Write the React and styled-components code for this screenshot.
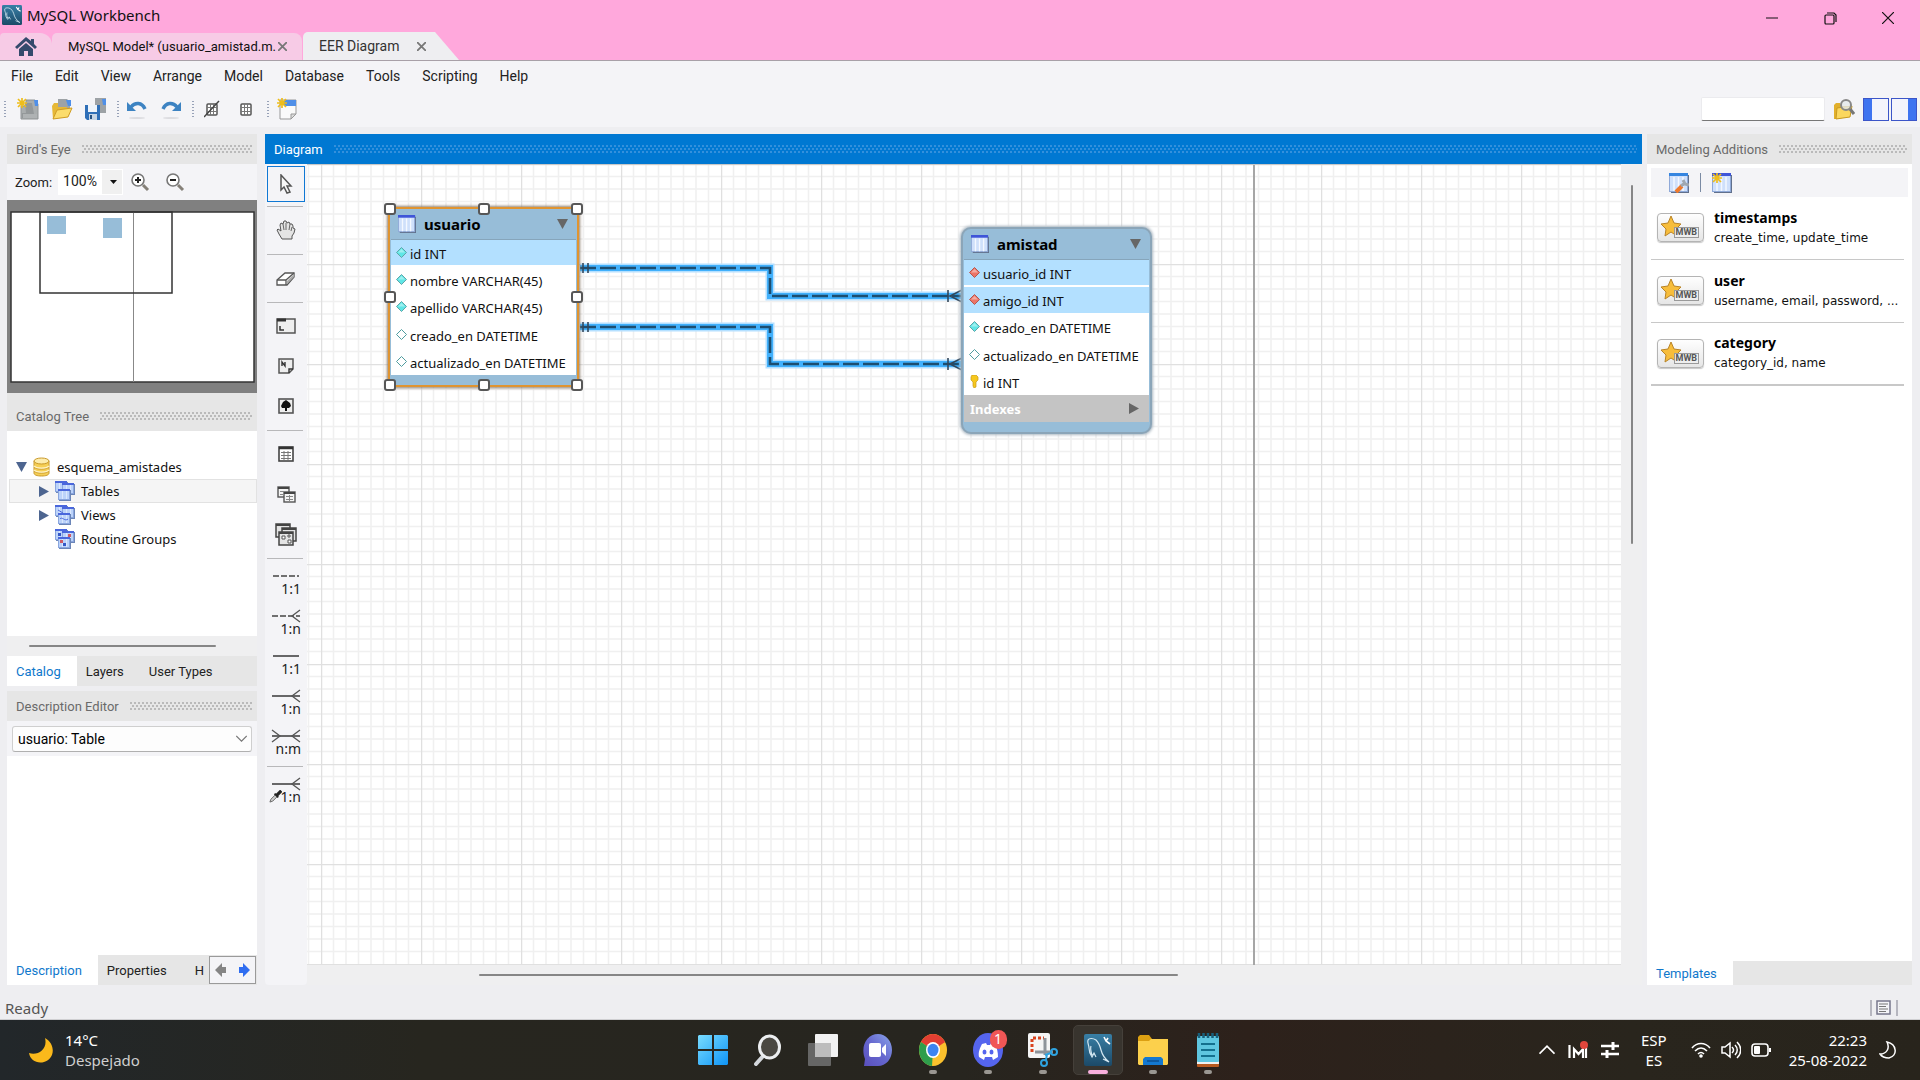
import React from "react";
import styled, { createGlobalStyle, css } from "styled-components";

const ui = '"Roboto", "Liberation Sans", sans-serif';
const system = '"Noto Sans", "Open Sans", sans-serif';
const wide = '"DejaVu Sans", sans-serif';

const Global = createGlobalStyle`
  *, *::before, *::after { box-sizing: border-box; }
  body { margin: 0; background: #eeeef1; font-family: ${ui}; font-size: 14px; color: #222; }
  button, input, select { font: inherit; color: inherit; }
  button { border: 0; padding: 0; background: none; }
  svg { display: block; flex: none; }
  ul { list-style: none; margin: 0; padding: 0; }
`;

/* ---------- window frame ---------- */

const Window = styled.div`
  display: flex;
  flex-direction: column;
  height: 100vh;
  overflow: hidden;
`;

const TitleArea = styled.header`
  background: #ffa8dc;
  height: 61px;
  flex: none;
  display: flex;
  flex-direction: column;
  justify-content: space-between;
  border-bottom: 1px solid #a8a0a8;
`;

const TitleRow = styled.div`
  display: flex;
  justify-content: space-between;
  height: 32px;
`;

const AppTitle = styled.h1`
  margin: 0;
  padding-left: 2px;
  display: flex;
  align-items: center;
  gap: 5px;
  height: 30px;
  font: 400 15px/20px ${system};
  color: #111;
`;

const WindowButtons = styled.div`
  display: flex;
  padding-right: 3px;
`;

const WindowButton = styled.button`
  width: 58px;
  height: 36px;
  display: grid;
  place-items: center;
`;

const FileTabs = styled.nav`
  display: flex;
  align-items: flex-end;
  height: 28px;
`;

const HomeTab = styled.button`
  width: 52px;
  height: 27px;
  display: grid;
  place-items: center;
  background: #f7cbe6;
  border-radius: 4px 12px 0 0;
`;

const FileTab = styled.div`
  display: flex;
  align-items: center;
  justify-content: space-between;
  height: ${(p) => (p.$active ? 28 : 27)}px;
  width: ${(p) => (p.$active ? 156 : 250)}px;
  padding: 0 ${(p) => (p.$active ? 32 : 14)}px 0 16px;
  background: ${(p) => (p.$active ? "#eeeef1" : "#f7cbe6")};
  color: ${(p) => (p.$active ? "#333" : "#111")};
  font-size: ${(p) => (p.$active ? 14 : 13)}px;
  border-radius: 5px ${(p) => (p.$active ? 0 : 8)}px 0 0;
  margin-right: 1px;
  white-space: nowrap;
  ${(p) => p.$active && css`clip-path: polygon(0 0, 132px 0, 100% 100%, 0 100%);`}
`;

const TabClose = styled.button`
  display: grid;
  place-items: center;
  width: 12px;
  height: 12px;
`;

const MenuBar = styled.nav`
  display: flex;
  flex: none;
  gap: 22px;
  padding-left: 11px;
  height: 30px;
  background: #f4f4f7;
`;

const MenuItem = styled.button`
  color: #222;
`;

const Toolbar = styled.div`
  display: flex;
  flex: none;
  align-items: center;
  justify-content: space-between;
  height: 36px;
  padding: 0 3px 0 4px;
  background: #f4f4f7;
`;

const ToolGroup = styled.div`
  display: flex;
  align-items: center;
  gap: ${(p) => p.$gap || 0}px;
`;

const Grip = styled.span`
  width: 2px;
  height: 17px;
  margin: ${(p) => (p.$first ? "0 5px 0 0" : "0 1px 0 4px")};
  background: repeating-linear-gradient(#98a2b8 0 1px, transparent 1px 3px);
`;

const ToolButton = styled.button`
  width: 34px;
  height: 28px;
  display: grid;
  place-items: center;
`;

const SearchBox = styled.input`
  width: 124px;
  height: 24px;
  padding: 0 4px;
  background: #fff;
  border: 1px solid #ebebee;
  border-bottom: 1px solid #777;
  border-radius: 2px;
`;

const ToggleButton = styled.button`
  width: 26px;
  height: 23px;
  border: 1px solid #3c55c8;
  background: ${(p) =>
    p.$side === "left"
      ? "linear-gradient(90deg, #3f74f0 8px, #f4f4fb 8px)"
      : "linear-gradient(270deg, #3f74f0 8px, #f4f4fb 8px)"};
`;

/* ---------- panels ---------- */

const Workspace = styled.main`
  display: flex;
  flex: 1;
  min-height: 0;
  padding: 7px 8px 0 7px;
`;

const Side = styled.aside`
  display: flex;
  flex-direction: column;
  flex: none;
  width: ${(p) => p.$w}px;
`;

const Header = styled.div`
  display: flex;
  align-items: center;
  flex: none;
  gap: 11px;
  height: ${(p) => (p.$tall ? 38 : 30)}px;
  padding: ${(p) => (p.$tall ? 8 : 0)}px 5px 0 9px;
  background: ${(p) => (p.$active ? "#0078d2" : "#e6e6e6")};
  color: ${(p) => (p.$active ? "#fff" : "#6a6a6a")};
  font-size: 13px;
  white-space: nowrap;
`;

const Dots = styled.span`
  flex: 1;
  height: 8px;
  --dot: ${(p) => (p.$active ? "#3490dc" : "#bababa")};
  background:
    radial-gradient(circle at 1px 1px, var(--dot) 1px, transparent 1px) 0 0 / 4px 6px,
    radial-gradient(circle at 3px 4px, var(--dot) 1px, transparent 1px) 0 0 / 4px 6px;
`;

const ZoomRow = styled.div`
  display: flex;
  align-items: center;
  flex: none;
  height: 36px;
  padding-left: 8px;
  background: #f4f4f7;
`;

const ZoomLabel = styled.label`
  font-size: 13px;
`;

const SelectWrap = styled.div`
  position: relative;
  display: flex;
  flex: ${(p) => (p.$grow ? 1 : "none")};
  svg {
    position: absolute;
    right: ${(p) => (p.$grow ? 5 : 6)}px;
    top: ${(p) => (p.$grow ? 9 : 11)}px;
    pointer-events: none;
  }
`;

const ZoomSelect = styled.select`
  appearance: none;
  width: 65px;
  height: 26px;
  margin-left: 6px;
  padding: 0 0 2px 4px;
  border: 1px solid #fff;
  border-radius: 0;
  background: linear-gradient(270deg, #f0f0f0 20px, #fff 20px);
`;

const ObjectSelect = styled.select`
  appearance: none;
  width: 100%;
  height: 26px;
  padding: 0 5px;
  border: 1px solid #cfcfcf;
  border-bottom-color: #b0b0b0;
  border-radius: 3px;
  background: #fdfdfd;
  color: #000;
`;

const ZoomButton = styled.button`
  width: 35px;
  height: 28px;
  display: grid;
  place-items: center;
`;

const BirdView = styled.div`
  flex: none;
  height: 193px;
  background: #808080;
`;

const Tree = styled.div`
  flex: none;
  height: 205px;
  padding: 24px 0 0 2px;
  background: #fff;
  font-family: ${system};
  font-size: 13px;
  color: #111;
`;

const TreeRow = styled.div`
  display: flex;
  align-items: center;
  gap: 6px;
  height: 24px;
  padding-left: ${(p) => (p.$depth ? 29 : 6)}px;
  border: 1px solid ${(p) => (p.$hover ? "#e2e2e2" : "transparent")};
  background: ${(p) => (p.$hover ? "#f5f5f5" : "transparent")};
`;

const TreeLabel = styled.span`
  padding-left: ${(p) => (p.$depth ? 0 : 1)}px;
`;

const HScroll = styled.div`
  flex: none;
  height: ${(p) => p.$h}px;
  padding: 9px ${(p) => p.$right} 0 ${(p) => p.$left};
  background: #efeff0;
`;

const Thumb = styled.div`
  height: ${(p) => (p.$vertical ? "359px" : "2px")};
  width: ${(p) => (p.$vertical ? "2px" : "100%")};
  background: #868686;
  border-radius: 1px;
`;

const Tabs = styled.div`
  display: flex;
  flex: none;
  height: ${(p) => p.$h || 30}px;
  background: #e6e6e6;
  font-size: 13px;
  overflow: hidden;
`;

const Tab = styled.button`
  flex: none;
  padding: 0 16px 0 9px;
  background: ${(p) => (p.$active ? "#fff" : "transparent")};
  color: ${(p) => (p.$active ? "#0f78cc" : "#222")};
`;

const CutTab = styled(Tab)`
  flex: 1;
  min-width: 0;
  padding: 0 0 0 12px;
  text-align: left;
`;

const TabArrows = styled.div`
  flex: none;
  display: flex;
  align-items: center;
  justify-content: space-around;
  width: 47px;
  height: 28px;
  margin: 1px 1px 0 0;
  background: #f4f4f7;
  border: 1px solid #9a9a9a;
`;

const ComboRow = styled.div`
  display: flex;
  flex: none;
  height: 35px;
  padding: 5px;
  background: #f4f4f7;
`;

const Blank = styled.div`
  flex: 1;
  background: #fff;
`;

const Gap = styled.div`
  height: 5px;
  flex: none;
`;

/* ---------- diagram ---------- */

const Center = styled.section`
  display: flex;
  flex-direction: column;
  flex: 1;
  min-width: 0;
  margin: 0 5px 0 8px;
`;

const CenterBody = styled.div`
  display: flex;
  flex: 1;
  min-height: 0;
`;

const Palette = styled.div`
  display: flex;
  flex-direction: column;
  flex: none;
  width: 42px;
  padding: 2px 2px 0 2px;
  background: #f4f4f7;
  border-radius: 0 0 4px 4px;
`;

const PaletteButton = styled.button`
  display: flex;
  flex-direction: column;
  align-items: ${(p) => (p.$relation ? "flex-end" : "center")};
  justify-content: center;
  flex: none;
  height: ${(p) => (p.$selected ? 36 : 40)}px;
  padding-right: ${(p) => (p.$relation ? 4 : 0)}px;
  border: ${(p) => (p.$selected ? "1px solid #0f78d4" : "0")};
  font: 400 14px/12px ${system};
  color: #222;
`;

const PaletteRule = styled.hr`
  flex: none;
  width: 36px;
  height: 1px;
  margin: 4px 0 3px;
  border: 0;
  background: #b8b8ba;
`;

const CanvasColumn = styled.div`
  display: flex;
  flex-direction: column;
  flex: 1;
  min-width: 0;
`;

const CanvasRow = styled.div`
  display: flex;
  flex: 1;
  min-height: 0;
`;

const Canvas = styled.div`
  position: relative;
  flex: 1;
  min-width: 0;
  overflow: hidden;
  background: #fff;
  border-top: 1px solid #c8c8c8;
`;

const CanvasLayer = styled.svg`
  position: absolute;
  inset: 0;
  width: 100%;
  height: 100%;
`;

const VScroll = styled.div`
  flex: none;
  width: 21px;
  padding: 21px 0 0 10px;
  background: #efeff0;
`;

const Entity = styled.article`
  position: absolute;
  left: ${(p) => p.$x}px;
  top: ${(p) => p.$y}px;
  width: 191px;
  padding: 0 1px 10px;
  background: #97bdd8;
  border: 2px solid ${(p) => (p.$selected ? "#df9431" : "#8ba5b8")};
  border-radius: ${(p) => (p.$selected ? 4 : 10)}px;
  box-shadow: 0 0 3px 1px ${(p) => (p.$selected ? "#8f7f70" : "#a9b6c0")};
  font-family: ${system};
  font-size: 13px;
  color: #111;
`;

const EntityHead = styled.div`
  display: flex;
  align-items: center;
  height: 31px;
  padding: 0 8px 0 7px;
  border-bottom: 1px solid #86a5bb;
`;

const EntityName = styled.h2`
  flex: 1;
  margin: 0;
  padding-left: 8px;
  font: 700 15px/20px ${system};
  color: #000;
`;

const Columns = styled.ul`
  display: grid;
  grid-auto-rows: 1fr;
  gap: 2px;
  height: 135px;
  background: #fff;
`;

const Column = styled.li`
  display: flex;
  align-items: center;
  gap: 3px;
  padding: 2px 0 0 5px;
  background: ${(p) => (p.$key ? "#b3e0ff" : "#fff")};
  white-space: nowrap;
  svg { margin-bottom: 3px; }
`;

const Indexes = styled.div`
  display: flex;
  align-items: center;
  justify-content: space-between;
  height: 27px;
  padding: 0 10px 0 6px;
  background: #c4c4c4;
  font-weight: 700;
  color: #fff;
`;

const Handle = styled.span`
  position: absolute;
  left: ${(p) => p.$x};
  top: ${(p) => p.$y};
  width: 12px;
  height: 12px;
  margin: -6px 0 0 -6px;
  background: #fff;
  border: 2px solid #575757;
  border-radius: 3px;
`;

/* ---------- templates ---------- */

const TemplateArea = styled.div`
  flex: 1;
  min-height: 0;
  padding: 4px 4px 0 4px;
  background: #fff;
`;

const TemplateTools = styled.div`
  display: flex;
  align-items: center;
  gap: 11px;
  height: 29px;
  padding-left: 18px;
  background: #f4f4f7;
`;

const ToolRule = styled.span`
  width: 1px;
  height: 19px;
  background: #7b8ba4;
`;

const Template = styled.li`
  display: flex;
  align-items: center;
  gap: 10px;
  height: 63px;
  margin-right: 4px;
  padding: 0 0 1px 6px;
  border-bottom: 1px solid #c8c8c8;
  &:last-child { border-bottom-width: 2px; }
`;

const TemplateText = styled.div`
  font: 400 12px/20px ${wide};
  color: #111;
  white-space: nowrap;
`;

const TemplateName = styled.div`
  font: 700 14px/20px ${system};
  color: #000;
`;

const Badge = styled.span`
  position: relative;
  display: block;
  width: 47px;
  height: 29px;
  border: 1px solid #b4b4b4;
  border-radius: 4px;
  background: linear-gradient(#fefefe, #e6e6e6);
  box-shadow: 0 1px 1px #c8c8c8;
`;

const BadgeText = styled.span`
  position: absolute;
  right: 4px;
  bottom: 3px;
  padding: 0 1px;
  border: 1px solid #9a9a9a;
  background: #eee;
  font: 700 9px/9px ${ui};
  color: #555;
`;

const StatusBar = styled.footer`
  display: flex;
  align-items: center;
  justify-content: space-between;
  flex: none;
  height: 35px;
  padding: 12px 22px 0 5px;
  border-bottom: 1px solid #cfcfd2;
  font: 400 15px/20px ${system};
  color: #555;
`;

/* ---------- taskbar ---------- */

const Taskbar = styled.footer`
  display: grid;
  grid-template-columns: 1fr auto 1fr;
  align-items: center;
  flex: none;
  height: 60px;
  background: linear-gradient(90deg, #22272a 0, #27261f 22%, #27251f 50%, #2d211b 65%, #29251d 85%, #28241c);
  color: #fff;
  font: 400 15px/20px ${system};
`;

const Weather = styled.div`
  display: flex;
  align-items: center;
  gap: 11px;
  padding-left: 28px;
`;

const Dim = styled.div`
  color: #cfcfcf;
`;

const Apps = styled.div`
  display: flex;
  gap: 5px;
`;

const AppButton = styled.button`
  position: relative;
  width: 50px;
  height: 50px;
  display: grid;
  place-items: center;
  border-radius: 5px;
  border: 1px solid ${(p) => (p.$active ? "#45403a" : "transparent")};
  background: ${(p) => (p.$active ? "#38342e" : "transparent")};
  &::after {
    content: "";
    position: absolute;
    bottom: 0;
    left: calc(50% - ${(p) => (p.$active ? 10 : 4)}px);
    width: ${(p) => (p.$active ? 20 : 8)}px;
    height: 4px;
    border-radius: 2px;
    background: ${(p) => (p.$active ? "#f9b0de" : p.$open ? "#9a9792" : "transparent")};
  }
`;

const Count = styled.span`
  position: absolute;
  right: 5px;
  top: 4px;
  width: 17px;
  height: 19px;
  border-radius: 9px;
  background: #f05656;
  color: #fff;
  font: 400 14px/18px ${system};
  text-align: center;
`;

const Tray = styled.div`
  display: flex;
  align-items: center;
  justify-content: flex-end;
  padding-right: 24px;
`;

const TrayIcons = styled.div`
  display: flex;
  align-items: center;
  gap: ${(p) => p.$gap}px;
`;

const Language = styled.div`
  text-align: center;
  margin: 0 24px 0 22px;
`;

const Clock = styled.div`
  text-align: right;
  margin: 0 12px 0 18px;
`;

/* ---------- icons ---------- */

const Dolphin = ({ size = 20, h = size }) => (
  <svg width={size} height={h} viewBox="0 0 28 32" preserveAspectRatio="none">
    <defs>
      <linearGradient id="dolphinBg" x1="0" y1="0" x2="0" y2="1">
        <stop offset="0" stopColor="#387fa6" />
        <stop offset="1" stopColor="#1c4a68" />
      </linearGradient>
    </defs>
    <rect width="28" height="32" rx="2" fill="url(#dolphinBg)" />
    <path d="M4 6c1-2 5-2 8 0 3 3 4 6 5 10 1 4 3 8 8 12l-6-3M4 6c-1 3 1 5 1 8 0 4 1 6 3 9l2-4 2 4M7 12c-1 3 0 6 1 9" fill="none" stroke="#d4e8f2" strokeWidth="1.200" />
    <path d="M20 3l2 4 4 3M24 4l-2 3" stroke="#fff" strokeWidth="1.600" fill="none" />
  </svg>
);

const House = () => (
  <svg width="22" height="19" viewBox="0 0 22 19">
    <path d="M11 0L0 10l2 2 9-8 9 8 2-2-3-3V2h-3v2z" fill="#354a6c" />
    <path d="M4 12l7-6 7 6v7h-5v-5H9v5H4z" fill="#354a6c" />
  </svg>
);

const Cross = ({ size = 9, color = "#777", w = 2 }) => (
  <svg width={size} height={size} viewBox="0 0 10 10">
    <path d="M0 0L10 10M10 0L0 10" stroke={color} strokeWidth={w} />
  </svg>
);

const Spark = () => (
  <path d="M5 0v10M0 5h10M1 1l8 8M9 1L1 9" stroke="#eebd1c" strokeWidth="1.700" />
);

const NewModel = () => (
  <svg width="22" height="22" viewBox="0 0 22 22">
    <path d="M9 2h9l3 4v15H4V8h5z" fill="#a9adae" stroke="#909496" />
    <path d="M17 2h4v6h-3z" fill="#4f8fe8" />
    <path d="M8 5h7l2 11h3v4H5v-5h4z" fill="#94989a" />
    <path d="M6 17h14M6 19h14" stroke="#c9cccd" />
    <Spark />
  </svg>
);

const OpenModel = () => (
  <svg width="22" height="22" viewBox="0 0 22 22">
    <path d="M7 1h9l3 3v8H7z" fill="#9da2a6" />
    <path d="M15 2h5v6h-3z" fill="#4f8fe8" />
    <path d="M1 8l2-3h4v4h9v3H6l-4 9z" fill="#e6b836" />
    <path d="M2 21l4-9 15-2-4 9z" fill="#fbdc6c" stroke="#cf9b20" />
  </svg>
);

const SaveModel = () => (
  <svg width="22" height="22" viewBox="0 0 22 22">
    <path d="M10 0h11v15H10z" fill="#9da2a6" />
    <path d="M17 1h4v6h-3z" fill="#4f8fe8" />
    <path d="M0 7h15v15H2l-2-2z" fill="#2f6fb7" />
    <rect x="3" y="7" width="9" height="7" fill="#eef4fb" />
    <rect x="4" y="16" width="8" height="6" fill="#c5d4e4" />
    <rect x="5" y="17" width="2" height="4" fill="#25507f" />
  </svg>
);

const Undo = ({ flip }) => (
  <svg width="20" height="22" viewBox="0 0 20 22">
    <g transform={flip ? "matrix(-1 0 0 1 20 0)" : undefined}>
      <path d="M4 9c4-5 11-5 14 2" fill="none" stroke="#3d83c2" strokeWidth="3.400" />
      <path d="M0 4v9h9z" fill="#3d83c2" />
    </g>
    <ellipse cx="10" cy="20" rx="8" ry="1" fill="#dcdce0" />
  </svg>
);

const GridIcon = ({ off }) => (
  <svg width="16" height="18" viewBox="0 0 16 18">
    <rect x="3" y="4" width="10" height="11" rx="1" fill="#fff" stroke="#555" strokeWidth="1.500" />
    <path d="M6.500 4v11M9.500 4v11M3 7.500h10M3 11.500h10" stroke="#777" />
    {off && <path d="M0 17L15 1" stroke="#444" strokeWidth="1.500" />}
  </svg>
);

const NewPage = () => (
  <svg width="20" height="22" viewBox="0 0 20 22">
    <path d="M3 2h16v14l-5 5H3z" fill="#fafafa" stroke="#999" />
    <rect x="7" y="2" width="12" height="6" fill="#4f8fe8" />
    <path d="M19 16h-5v5z" fill="#ddd" stroke="#999" />
    <Spark />
  </svg>
);

const SearchFolder = () => (
  <svg width="22" height="22" viewBox="0 0 22 22">
    <path d="M1 7l2-2h4l2 3h9v5l-2 6-13 2H1z" fill="#e2b02c" />
    <path d="M3 21l1-11 15-2-2 11z" fill="#fbd75e" stroke="#c99a1f" />
    <circle cx="13" cy="7" r="5" fill="#e4e8ea" fillOpacity=".8" stroke="#888" strokeWidth="2" />
    <path d="M17 11l4 5" stroke="#777" strokeWidth="3" />
  </svg>
);

const Lens = ({ plus }) => (
  <svg width="19" height="19" viewBox="0 0 19 19">
    <circle cx="7" cy="7" r="6" fill="#fff" stroke="#777" strokeWidth="1.600" />
    <path d={plus ? "M4 7h6M7 4v6" : "M4 7h6"} stroke="#222" strokeWidth="2" />
    <path d="M12 12l5 5" stroke="#858078" strokeWidth="3" />
  </svg>
);

const Triangle = ({ dir, color = "#4d6590", w = 11, h = 10 }) => (
  <svg width={w} height={h} viewBox="0 0 10 10" preserveAspectRatio="none">
    <path d={dir === "down" ? "M0 0h10L5 10z" : "M0 0v10l10-5z"} fill={color} />
  </svg>
);

const Chevron = ({ up, color = "#777", w = 11, h = 7 }) => (
  <svg width={w} height={h} viewBox="0 0 12 8">
    <path d={up ? "M0 7l6-6 6 6" : "M0 1l6 6 6-6"} fill="none" stroke={color} strokeWidth="1.400" />
  </svg>
);

const Database = () => (
  <svg width="17" height="20" viewBox="0 0 17 20">
    <path d="M1 4v12c0 2 3 3 7.500 3s7.500-1 7.500-3V4z" fill="#f6cf55" stroke="#c9992a" />
    <ellipse cx="8.500" cy="4" rx="7.500" ry="3" fill="#fdecac" stroke="#c9992a" />
    <path d="M1 9c2 3 13 3 15 0M1 13c2 3 13 3 15 0" fill="none" stroke="#fff3c4" strokeWidth="1.500" />
    <path d="M1 10c2 3 13 3 15 0M1 14c2 3 13 3 15 0" fill="none" stroke="#c9992a" strokeWidth=".8" />
  </svg>
);

const MiniTable = ({ x, y }) => (
  <g transform={`translate(${x} ${y})`}>
    <rect x="1" y="1" width="12" height="11" fill="#6c86b8" />
    <rect x=".5" y=".5" width="11" height="10" fill="#bcd3fa" stroke="#8aa6de" />
    <rect width="12" height="2" fill="#4a67dc" />
    <path d="M4.500 2v8M8.500 2v8" stroke="#dbe8fd" />
  </g>
);

const TreeIcon = ({ kind }) => (
  <svg width="20" height="20" viewBox="0 0 20 20">
    <MiniTable x={0} y={0} />
    <MiniTable x={7} y={2} />
    <MiniTable x={3} y={8} />
    {kind === "views" && <path d="M5 14c2-3 5 3 8 0M3 5l5 3" stroke="#4a67dc" fill="none" />}
    {kind === "routines" && (
      <g>
        <path d="M3 4h3v3H3zM8 14h3v3H8z" fill="#3458c8" />
        <path d="M13 5h3v3h-3zM5 11h3v3H5z" fill="#cf5a66" />
      </g>
    )}
  </svg>
);

const TableIcon = ({ spark, wrench, size = 18 }) => (
  <svg width={size} height={size} viewBox="0 0 20 20">
    <rect x="2" y="2" width="18" height="18" fill="#61708c" />
    <rect x=".5" y=".5" width="18" height="18" fill="#cfe0fb" stroke="#8fa9d8" />
    <rect width="19" height="3" fill={wrench ? "#3585e0" : "#3f55d8"} />
    <path d="M5 4v14M9.500 4v14M14 4v14" stroke="#f4f8ff" strokeWidth="1.500" />
    {spark && <Spark />}
    {wrench && (
      <g>
        <path d="M7 19l6-6" stroke="#ef7a2c" strokeWidth="4" />
        <path d="M12 13l4-3M14 7l2 4 4 1" stroke="#9fa7b0" strokeWidth="3" fill="none" />
      </g>
    )}
  </svg>
);

const Diamond = ({ kind }) => {
  if (kind === "key")
    return (
      <svg width="11" height="13" viewBox="0 0 11 13">
        <path d="M3 0h4l2 2v3L7 7v5L5 13 4 11V7L2 5V2z" fill="#f6c81e" stroke="#c79a18" strokeWidth=".7" />
      </svg>
    );
  const fill = { cyan: "#5fe6e6", red: "#ec7466", empty: "#fff" }[kind];
  const line = { cyan: "#5fa5a8", red: "#b4574f", empty: "#4f9c9f" }[kind];
  return (
    <svg width="11" height="11" viewBox="0 0 11 11">
      <path d="M5.500 .5L10.500 5.500 5.500 10.500 .5 5.500z" fill={fill} stroke={line} />
      {kind !== "empty" && <path d="M5.500 2L9 5.500H2z" fill="#fff" fillOpacity=".4" />}
    </svg>
  );
};

const Relation = ({ kind }) => (
  <svg width="30" height="14" viewBox="0 0 30 14">
    <path
      d={kind.one ? "M2 7h26" : "M1 7h28"}
      stroke="#444"
      strokeWidth="1.600"
      strokeDasharray={kind.dashed ? "6 2" : undefined}
    />
    {!kind.one && <path d="M29 1l-8 6 8 6" fill="none" stroke="#555" strokeWidth="1.300" />}
    {kind.both && <path d="M1 1l8 6-8 6" fill="none" stroke="#555" strokeWidth="1.300" />}
  </svg>
);

const Dropper = styled.svg`
  position: absolute;
  left: 0;
  bottom: 0;
`;

const RelationText = styled.span`
  position: relative;
  width: ${(p) => (p.$wide ? "32px" : "auto")};
  text-align: right;
`;

const Pal = ({ kind }) => {
  switch (kind) {
    case "cursor":
      return (
        <svg width="14" height="20" viewBox="0 0 14 20">
          <path d="M2 1v15l3-3 3 6 3-1-3-6h4z" fill="#f8f8f8" stroke="#555" strokeWidth="1.500" />
        </svg>
      );
    case "hand":
      return (
        <svg width="20" height="20" viewBox="0 0 20 20">
          <path d="M6 19l-3-5-2-4 1-1 3 2-1-6 1-2 2 1 1-3h2l1 2 2-1 1 2 2 0 1 2v2l2 1-1 4-2 3v3z" fill="#e4e4e4" stroke="#555" />
          <path d="M7 4l1 6M10 3v7M14 4l-1 6M16 7l-1 4" stroke="#666" fill="none" />
        </svg>
      );
    case "eraser":
      return (
        <svg width="20" height="15" viewBox="0 0 20 15">
          <path d="M1 9l8-7h9v4l-7 8H1z" fill="#fff" stroke="#555" strokeWidth="1.300" />
          <path d="M1 9h9v5M10 9l8-7" fill="none" stroke="#555" strokeWidth="1.300" />
          <path d="M11 10l7-7v3l-7 7z" fill="#aaa" />
        </svg>
      );
    case "layer":
      return (
        <svg width="20" height="16" viewBox="0 0 20 16">
          <rect x="1" y="1" width="18" height="14" fill="#eee" stroke="#555" strokeWidth="1.500" />
          <path d="M1 2h9" stroke="#333" strokeWidth="3" />
          <path d="M4 8v4h4" fill="none" stroke="#333" strokeWidth="1.500" />
        </svg>
      );
    case "note":
      return (
        <svg width="16" height="16" viewBox="0 0 16 16">
          <path d="M1 1h14v10l-4 4H1z" fill="#eee" stroke="#555" strokeWidth="1.500" />
          <path d="M4 8V4l3 4V4M15 11h-4v4" fill="none" stroke="#333" strokeWidth="1.400" />
        </svg>
      );
    case "image":
      return (
        <svg width="16" height="16" viewBox="0 0 16 16">
          <rect x="1" y="1" width="14" height="14" fill="#eee" stroke="#555" strokeWidth="1.600" />
          <path d="M7 13v-3H4L3 8l2-4 3-2 4 3 1 3-2 2H9v3z" fill="#111" />
        </svg>
      );
    case "table":
      return (
        <svg width="16" height="16" viewBox="0 0 16 16">
          <rect x="1" y="1" width="14" height="14" fill="#fff" stroke="#444" strokeWidth="1.600" />
          <path d="M1 2h14" stroke="#333" strokeWidth="2.500" />
          <path d="M3 6.500h10M3 9.500h10M3 12.500h10M6 5v9M10 5v9" stroke="#777" />
        </svg>
      );
    case "view":
      return (
        <svg width="19" height="17" viewBox="0 0 19 17">
          <g fill="#f4f4f4" stroke="#555" strokeWidth="1.400">
            <rect x="1" y="1" width="11" height="10" />
            <rect x="7" y="6" width="11" height="10" />
          </g>
          <path d="M1 2h11M7 7h11" stroke="#444" strokeWidth="2" />
          <path d="M3 5.500h5M3 8.500h4M9 10.500h7M9 13.500h7M12.500 9v6" stroke="#888" />
        </svg>
      );
    default:
      return (
        <svg width="22" height="23" viewBox="0 0 22 23">
          <g fill="#e4e4e4" stroke="#444" strokeWidth="1.500">
            <rect x="1" y="1" width="14" height="13" />
            <rect x="7" y="5" width="14" height="13" />
            <rect x="4" y="9" width="14" height="13" />
          </g>
          <path d="M1 2h14M7 6h14M4 10h14" stroke="#444" strokeWidth="2" />
          <path d="M7 13h3v3H7zM13 12h2v2h-2zM13 17h3v3h-3z" fill="#fff" stroke="#555" />
        </svg>
      );
  }
};

const Moon = () => (
  <svg width="26" height="26" viewBox="0 0 26 26">
    <path d="M17 1c11 6 10 21-1 24C9 27 2 23 1 16c9 3 19-4 16-15z" fill="#fbb91b" />
  </svg>
);

const AppIcon = ({ kind }) => {
  switch (kind) {
    case "start":
      return (
        <svg width="30" height="30" viewBox="0 0 30 30">
          <defs>
            <linearGradient id="win" gradientUnits="userSpaceOnUse" x1="0" y1="0" x2="30" y2="30">
              <stop offset="0" stopColor="#79dcff" />
              <stop offset="1" stopColor="#0f94f5" />
            </linearGradient>
          </defs>
          <path d="M1 0h13v14H0V1zM16 0h13l1 1v13H16zM0 16h14v14H1l-1-1zM16 16h14v13l-1 1H16z" fill="url(#win)" />
        </svg>
      );
    case "search":
      return (
        <svg width="28" height="32" viewBox="0 0 28 32">
          <path d="M2 30l8-9" stroke="#d4d8dc" strokeWidth="4" strokeLinecap="round" />
          <ellipse cx="15.500" cy="13" rx="10" ry="11" fill="#4a4842" stroke="#eceef0" strokeWidth="3" />
        </svg>
      );
    case "tasks":
      return (
        <svg width="30" height="32" viewBox="0 0 30 32">
          <rect x="7" y="0" width="23" height="23" rx="1" fill="#f2f2f2" />
          <rect x="0" y="9" width="23" height="23" rx="1" fill="#777" fillOpacity=".8" />
          <rect x="7" y="9" width="16" height="14" fill="#bdbdbd" />
        </svg>
      );
    case "chat":
      return (
        <svg width="29" height="33" viewBox="0 0 29 33">
          <defs>
            <linearGradient id="chat" x1="1" y1="0" x2="0" y2="1">
              <stop offset="0" stopColor="#8ba6ea" />
              <stop offset=".5" stopColor="#6668cf" />
              <stop offset="1" stopColor="#5a4fbd" />
            </linearGradient>
          </defs>
          <path d="M15 0c8 0 14 7 14 16S23 32 15 32H1l1-7C-3 12 4 0 15 0z" fill="url(#chat)" />
          <rect x="6" y="9" width="12" height="14" rx="2" fill="#fff" />
          <path d="M19 14l4-4v12l-4-4z" fill="#fff" />
        </svg>
      );
    case "chrome":
      return (
        <svg width="28" height="32" viewBox="0 0 28 28" preserveAspectRatio="none">
          <circle cx="14" cy="14" r="14" fill="#fbc12d" />
          <path d="M14 14L1.900 7A14 14 0 0 1 26.100 7z" fill="#e23e32" />
          <path d="M14 14L1.900 7A14 14 0 0 0 13 28z" fill="#2f9e4c" />
          <path d="M14 7h12.100L14 9z" fill="#e23e32" />
          <circle cx="14" cy="14" r="7" fill="#fff" />
          <circle cx="14" cy="14" r="5.500" fill="#3d84f0" />
        </svg>
      );
    case "discord":
      return (
        <svg width="30" height="34" viewBox="0 0 30 34">
          <ellipse cx="15" cy="17" rx="15" ry="17" fill="#5565ee" />
          <path d="M6 24c-1-5 1-9 3-13l4-1 1 2h3l1-2 4 1c2 4 3 8 3 13l-5 3-1-3h-7l-1 3z" fill="#fff" />
          <ellipse cx="11.500" cy="19" rx="2" ry="2.500" fill="#5565ee" />
          <ellipse cx="18.500" cy="19" rx="2" ry="2.500" fill="#5565ee" />
        </svg>
      );
    case "snip":
      return (
        <svg width="30" height="34" viewBox="0 0 30 34">
          <rect x="0" y="0" width="22" height="25" rx="2" fill="#f5f5f5" />
          <path d="M4 19V5h12" fill="none" stroke="#d9431e" strokeWidth="3" strokeDasharray="3 2" />
          <path d="M17 5v17M7 19h18" stroke="#8e949a" strokeWidth="3" />
          <g fill="none" stroke="#2ea3e0" strokeWidth="2">
            <circle cx="26" cy="19" r="3" />
            <circle cx="16" cy="30" r="3" />
            <path d="M18 27l1-6M17 22l6-2" />
          </g>
        </svg>
      );
    case "mysql":
      return <Dolphin size={28} h={32} />;
    case "files":
      return (
        <svg width="30" height="30" viewBox="0 0 30 30">
          <path d="M0 2l2-2h9l3 4h16v6H0z" fill="#dca012" />
          <path d="M0 6l11 0 2-2h17v25l-1 1H1l-1-1z" fill="#fcd04c" />
          <path d="M5 30v-6l2-2h16l2 2v6z" fill="#1478d0" />
          <path d="M9 26h12" stroke="#0b4f92" strokeWidth="1.500" />
        </svg>
      );
    default:
      return (
        <svg width="24" height="34" viewBox="0 0 24 34">
          <rect x="1" y="28" width="22" height="6" rx="1" fill="#b85a20" />
          <rect x="1" y="28" width="22" height="3" fill="#f0f0f0" />
          <rect x="1" y="3" width="22" height="26" rx="1" fill="#5fc6e0" />
          <path d="M3 0v5M7.500 0v5M12 0v5M16.500 0v5M21 0v5" stroke="#17607c" strokeWidth="2.500" />
          <path d="M5 11h14M5 17h14M5 23h14" stroke="#14708e" strokeWidth="2" />
        </svg>
      );
  }
};

/* ---------- content ---------- */

const menus = ["File", "Edit", "View", "Arrange", "Model", "Database", "Tools", "Scripting", "Help"];

const entities = [
  {
    name: "usuario", x: 81, y: 42, selected: true,
    columns: [
      ["cyan", "id INT", true],
      ["cyan", "nombre VARCHAR(45)"],
      ["cyan", "apellido VARCHAR(45)"],
      ["empty", "creado_en DATETIME"],
      ["empty", "actualizado_en DATETIME"],
    ],
  },
  {
    name: "amistad", x: 654, y: 62, indexes: true,
    columns: [
      ["red", "usuario_id INT", true],
      ["red", "amigo_id INT", true],
      ["cyan", "creado_en DATETIME"],
      ["empty", "actualizado_en DATETIME"],
      ["key", "id INT"],
    ],
  },
];

const handles = [
  ["0%", "0%"], ["50%", "0%"], ["100%", "0%"],
  ["0%", "50%"], ["100%", "50%"],
  ["0%", "100%"], ["50%", "100%"], ["100%", "100%"],
];

const paletteGroups = [
  ["hand"], ["eraser"], ["layer", "note", "image"], ["table", "view", "routine"],
];

const relations = [
  { label: "1:1", one: true, dashed: true },
  { label: "1:n", dashed: true },
  { label: "1:1", one: true },
  { label: "1:n" },
  { label: "n:m", both: true },
];

const templates = [
  ["timestamps", "create_time, update_time"],
  ["user", "username, email, password, ..."],
  ["category", "category_id, name"],
];

const apps = [
  ["start"], ["search"], ["tasks"], ["chat"], ["chrome", true], ["discord", true],
  ["snip", true], ["mysql", true, true], ["files", true], ["notes", true],
];

const links = ["M273 103H463V131H655", "M273 162H463V199H655"];

function PanelHeader({ children, active, tall }) {
  return (
    <Header $active={active} $tall={tall}>
      {children}
      <Dots $active={active} />
    </Header>
  );
}

function BirdsEye() {
  return (
    <BirdView>
      <svg width="100%" height="193" viewBox="0 0 250 193" preserveAspectRatio="none">
        <rect x="4" y="12" width="243" height="170" fill="#fff" stroke="#333" strokeWidth="1.500" />
        <rect x="40" y="16" width="19" height="18" fill="#97bdd8" />
        <rect x="96" y="18" width="19" height="20" fill="#97bdd8" />
        <path d="M126.500 12v170" stroke="#888" />
        <rect x="33" y="12" width="132" height="81" fill="none" stroke="#333" strokeWidth="1.500" />
      </svg>
    </BirdView>
  );
}

function DiagramCanvas() {
  return (
    <Canvas>
      <CanvasLayer>
        <defs>
          <pattern id="grid" x="14" y="-1" width="100" height="100" patternUnits="userSpaceOnUse">
            {[12.5, 25, 37.5, 50, 62.5, 75, 87.5].map((p) => (
              <path key={p} d={`M${p} 0v100M0 ${p}h100`} stroke="#f0f0f0" strokeWidth="1.500" />
            ))}
            <path d="M.5 0v100M0 .5h100" stroke="#e0e0e0" strokeWidth="1.500" />
          </pattern>
        </defs>
        <rect width="100%" height="100%" fill="url(#grid)" />
        <path d="M947 0v900" stroke="#a6a6a6" strokeWidth="2" />
        {links.map((d) => (
          <g key={d} fill="none">
            <path d={d} stroke="#b5e0ff" strokeWidth="9" />
            <path d={d} stroke="#40b0fc" strokeWidth="6" />
            <path d={d} stroke="#1d4e70" strokeWidth="2.600" strokeDasharray="16 4" />
          </g>
        ))}
        <path
          d="M276 98v10M281 98v10M276 157v10M281 157v10M641 125v12M641 193v12M655 125l-12 6 12 6M655 193l-12 6 12 6"
          fill="none" stroke="#33475a" strokeWidth="1.600"
        />
      </CanvasLayer>
      {entities.map((e) => (
        <Entity key={e.name} $x={e.x} $y={e.y} $selected={e.selected}>
          <EntityHead>
            <TableIcon />
            <EntityName>{e.name}</EntityName>
            <Triangle dir="down" color="#666" w={11} h={10} />
          </EntityHead>
          <Columns>
            {e.columns.map(([kind, text, key]) => (
              <Column key={text} $key={key}>
                <Diamond kind={kind} />
                {text}
              </Column>
            ))}
          </Columns>
          {e.indexes && (
            <Indexes>
              Indexes
              <Triangle dir="right" color="#666" w={10} h={11} />
            </Indexes>
          )}
          {e.selected && handles.map(([x, y]) => <Handle key={x + y} $x={x} $y={y} />)}
        </Entity>
      ))}
    </Canvas>
  );
}

export default function App() {
  return (
    <Window>
      <Global />
      <TitleArea>
        <TitleRow>
          <AppTitle><Dolphin size={20} />MySQL Workbench</AppTitle>
          <WindowButtons>
            <WindowButton aria-label="Minimize">
              <svg width="12" height="2"><path d="M0 1h12" stroke="#111" /></svg>
            </WindowButton>
            <WindowButton aria-label="Restore">
              <svg width="13" height="13" viewBox="0 0 13 13">
                <rect x="1" y="3" width="9" height="9" rx="1" fill="none" stroke="#111" strokeWidth="1.200" />
                <path d="M3 1h7l2 2v7" fill="none" stroke="#111" strokeWidth="1.200" />
              </svg>
            </WindowButton>
            <WindowButton aria-label="Close"><Cross size={12} color="#111" w={1} /></WindowButton>
          </WindowButtons>
        </TitleRow>
        <FileTabs>
          <HomeTab aria-label="Home"><House /></HomeTab>
          <FileTab>
            MySQL Model* (usuario_amistad.m.
            <TabClose aria-label="Close model"><Cross /></TabClose>
          </FileTab>
          <FileTab $active>
            EER Diagram
            <TabClose aria-label="Close diagram"><Cross /></TabClose>
          </FileTab>
        </FileTabs>
      </TitleArea>

      <MenuBar>
        {menus.map((m) => <MenuItem key={m}>{m}</MenuItem>)}
      </MenuBar>

      <Toolbar>
        <ToolGroup>
          <Grip $first />
          <ToolButton aria-label="New model"><NewModel /></ToolButton>
          <ToolButton aria-label="Open model"><OpenModel /></ToolButton>
          <ToolButton aria-label="Save model"><SaveModel /></ToolButton>
          <Grip />
          <ToolButton aria-label="Undo"><Undo /></ToolButton>
          <ToolButton aria-label="Redo"><Undo flip /></ToolButton>
          <Grip />
          <ToolButton aria-label="Toggle grid"><GridIcon off /></ToolButton>
          <ToolButton aria-label="Align to grid"><GridIcon /></ToolButton>
          <Grip />
          <ToolButton aria-label="New page"><NewPage /></ToolButton>
        </ToolGroup>
        <ToolGroup $gap={2}>
          <SearchBox type="text" aria-label="Search" />
          <ToolButton aria-label="Find"><SearchFolder /></ToolButton>
          <ToggleButton $side="left" aria-label="Left sidebar" />
          <ToggleButton $side="right" aria-label="Right sidebar" />
        </ToolGroup>
      </Toolbar>

      <Workspace>
        <Side $w={250}>
          <PanelHeader>Bird's Eye</PanelHeader>
          <ZoomRow>
            <ZoomLabel htmlFor="zoom">Zoom:</ZoomLabel>
            <SelectWrap>
              <ZoomSelect id="zoom"><option>100%</option></ZoomSelect>
              <Triangle dir="down" color="#111" w={7} h={4} />
            </SelectWrap>
            <ZoomButton aria-label="Zoom in"><Lens plus /></ZoomButton>
            <ZoomButton aria-label="Zoom out"><Lens /></ZoomButton>
          </ZoomRow>
          <BirdsEye />
          <PanelHeader tall>Catalog Tree</PanelHeader>
          <Tree>
            <TreeRow>
              <Triangle dir="down" />
              <Database />
              <TreeLabel>esquema_amistades</TreeLabel>
            </TreeRow>
            <TreeRow $depth={1} $hover>
              <Triangle dir="right" w={10} h={11} />
              <TreeIcon />
              <TreeLabel $depth={1}>Tables</TreeLabel>
            </TreeRow>
            <TreeRow $depth={1}>
              <Triangle dir="right" w={10} h={11} />
              <TreeIcon kind="views" />
              <TreeLabel $depth={1}>Views</TreeLabel>
            </TreeRow>
            <TreeRow $depth={1}>
              <Triangle dir="right" color="transparent" w={10} h={11} />
              <TreeIcon kind="routines" />
              <TreeLabel $depth={1}>Routine Groups</TreeLabel>
            </TreeRow>
          </Tree>
          <HScroll $h={20} $left="22px" $right="41px"><Thumb /></HScroll>
          <Tabs>
            <Tab $active>Catalog</Tab>
            <Tab>Layers</Tab>
            <Tab>User Types</Tab>
          </Tabs>
          <Gap />
          <PanelHeader>Description Editor</PanelHeader>
          <ComboRow>
            <SelectWrap $grow>
              <ObjectSelect aria-label="Object"><option>usuario: Table</option></ObjectSelect>
              <Chevron />
            </SelectWrap>
          </ComboRow>
          <Blank />
          <Tabs>
            <Tab $active>Description</Tab>
            <Tab>Properties</Tab>
            <CutTab>H</CutTab>
            <TabArrows>
              <svg width="12" height="14" viewBox="0 0 12 14"><path d="M0 7l7-7v4h4v6H7v4z" fill="#858585" /></svg>
              <svg width="12" height="14" viewBox="0 0 12 14"><path d="M12 7L5 0v4H1v6h4v4z" fill="#2f6df0" /></svg>
            </TabArrows>
          </Tabs>
        </Side>

        <Center>
          <PanelHeader active>Diagram</PanelHeader>
          <CenterBody>
            <Palette>
              <PaletteButton $selected aria-label="cursor"><Pal kind="cursor" /></PaletteButton>
              {paletteGroups.map((g) => (
                <React.Fragment key={g[0]}>
                  <PaletteRule />
                  {g.map((k) => (
                    <PaletteButton key={k} aria-label={k}><Pal kind={k} /></PaletteButton>
                  ))}
                </React.Fragment>
              ))}
              <PaletteRule />
              {relations.map((r, i) => (
                <PaletteButton key={i} $relation>
                  <Relation kind={r} />
                  <RelationText>{r.label}</RelationText>
                </PaletteButton>
              ))}
              <PaletteRule />
              <PaletteButton $relation>
                <Relation kind={{}} />
                <RelationText $wide>
                  <Dropper width="13" height="13" viewBox="0 0 14 14">
                    <path d="M1 13l1-3 5-5 2 2-5 5z" fill="#ccc" stroke="#666" />
                    <path d="M6 4l4 4M8 5l4-4 1 1-4 4z" stroke="#222" strokeWidth="2" fill="#222" />
                  </Dropper>
                  1:n
                </RelationText>
              </PaletteButton>
            </Palette>
            <CanvasColumn>
              <CanvasRow>
                <DiagramCanvas />
                <VScroll><Thumb $vertical /></VScroll>
              </CanvasRow>
              <HScroll $h={20} $left="172px" $right="464px"><Thumb /></HScroll>
            </CanvasColumn>
          </CenterBody>
        </Center>

        <Side $w={265}>
          <PanelHeader>Modeling Additions</PanelHeader>
          <TemplateArea>
            <TemplateTools>
              <TableIcon wrench size={20} />
              <ToolRule />
              <TableIcon spark size={20} />
            </TemplateTools>
            <ul>
              {templates.map(([name, text]) => (
                <Template key={name}>
                  <Badge>
                    <svg width="24" height="24" viewBox="0 0 24 24">
                      <path d="M13 2l3 7 7 1-5 5 1 7-6-4-6 4 1-7-5-5 7-1z" fill="#f7bd3b" stroke="#b98427" />
                    </svg>
                    <BadgeText>MWB</BadgeText>
                  </Badge>
                  <TemplateText>
                    <TemplateName>{name}</TemplateName>
                    {text}
                  </TemplateText>
                </Template>
              ))}
            </ul>
          </TemplateArea>
          <Tabs $h={24}><Tab $active>Templates</Tab></Tabs>
        </Side>
      </Workspace>

      <StatusBar>
        Ready
        <svg width="28" height="16" viewBox="0 0 28 16">
          <path d="M1 0v16M27 0v16" stroke="#a4a4ae" strokeWidth="1.500" />
          <rect x="7" y="1" width="13" height="13" fill="#f4f4f8" stroke="#77778c" strokeWidth="1.500" />
          <path d="M9 4h9M9 6.500h7M9 9h9M9 11.500h7" stroke="#777" />
        </svg>
      </StatusBar>

      <Taskbar>
        <Weather>
          <Moon />
          <div>
            <div>14°C</div>
            <Dim>Despejado</Dim>
          </div>
        </Weather>
        <Apps>
          {apps.map(([kind, open, active]) => (
            <AppButton key={kind} aria-label={kind} $open={open} $active={active}>
              <AppIcon kind={kind} />
              {kind === "discord" && <Count>1</Count>}
            </AppButton>
          ))}
        </Apps>
        <Tray>
          <TrayIcons $gap={13}>
            <Chevron up color="#fff" w={16} h={10} />
            <svg width="20" height="18" viewBox="0 0 20 18">
              <path d="M1.500 4v13M6 17V8l4.500 5L15 8v9M18 6v11" fill="none" stroke="#fff" strokeWidth="2.200" />
              <circle cx="16" cy="4" r="4" fill="#e0463c" />
            </svg>
            <svg width="18" height="16" viewBox="0 0 18 16">
              <path d="M0 4h18M0 12h18" stroke="#fff" strokeWidth="2.500" />
              <path d="M12 0v8M6 8v8" stroke="#fff" strokeWidth="3" />
            </svg>
          </TrayIcons>
          <Language>ESP<br />ES</Language>
          <TrayIcons $gap={10}>
            <svg width="20" height="16" viewBox="0 0 20 16" fill="none" stroke="#fff" strokeWidth="1.600">
              <path d="M1 6c5-6 13-6 18 0M4 9c4-4 8-4 12 0M7 12c2-2 4-2 6 0" />
              <circle cx="10" cy="14" r="1" fill="#fff" />
            </svg>
            <svg width="20" height="18" viewBox="0 0 20 18" fill="none" stroke="#fff" strokeWidth="1.500">
              <path d="M1 6h3l5-4v14l-5-4H1zM11 6c2 2 2 4 0 6M14 4c3 3 3 7 0 10M16 1c5 5 5 11 0 16" />
            </svg>
            <svg width="20" height="14" viewBox="0 0 20 14">
              <rect x="1" y="1" width="16" height="12" rx="3" fill="none" stroke="#fff" strokeWidth="1.600" />
              <rect x="3" y="3" width="6" height="8" rx="1" fill="#fff" />
              <path d="M19 5v4" stroke="#fff" strokeWidth="2" />
            </svg>
          </TrayIcons>
          <Clock>22:23<br />25-08-2022</Clock>
          <svg width="17" height="18" viewBox="0 0 17 18">
            <path d="M8 1c10 2 11 14 2 16-4 0-7-1-9-4 7 0 10-6 7-12z" fill="none" stroke="#fff" strokeWidth="1.500" />
          </svg>
        </Tray>
      </Taskbar>
    </Window>
  );
}
